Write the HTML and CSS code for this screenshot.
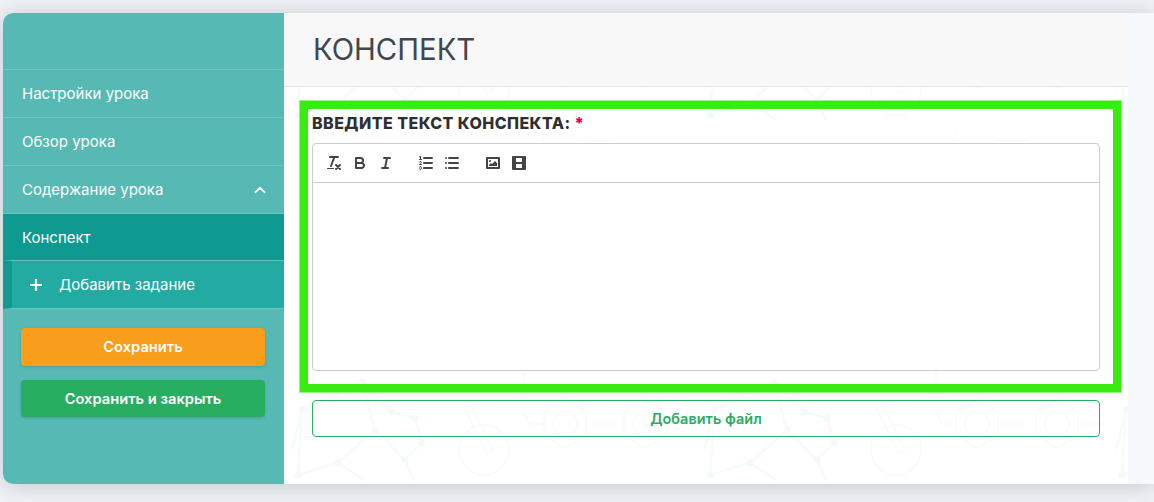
FILE: index.html
```html
<!DOCTYPE html>
<html lang="ru">
<head>
<meta charset="utf-8">
<title>Конспект</title>
<link rel="stylesheet" href="styles.css">
</head>
<body>
<div class="card">
  <aside class="sidebar">
    <div class="side-top"></div>
    <a class="item">Настройки урока</a>
    <a class="item">Обзор урока</a>
    <a class="item item-open">Содержание урока
      <svg class="chevron" viewBox="0 0 12 8" width="12" height="8"><path d="M1.5 6.2 6 1.8l4.5 4.4" fill="none" stroke="#fff" stroke-width="1.8" stroke-linecap="round" stroke-linejoin="round"/></svg>
    </a>
    <a class="item item-active">Конспект</a>
    <a class="item item-add">
      <svg class="plus" viewBox="0 0 12 12" width="12" height="12"><path d="M6 0v12M0 6h12" stroke="#fff" stroke-width="2.2"/></svg>
      Добавить задание
    </a>
    <div class="side-actions">
      <button class="btn btn-orange">Сохранить</button>
      <button class="btn btn-green">Сохранить и закрыть</button>
    </div>
  </aside>
  <main class="main">
    <header class="head"><h1 class="title">КОНСПЕКТ</h1></header>
    <section class="body">
      <svg class="pattern" aria-hidden="true" width="100%" height="100%">
        <defs>
          <pattern id="chem" x="0" y="113" width="412" height="360" patternUnits="userSpaceOnUse">
            <g fill="none" stroke="#f7fbfc" stroke-width="1.5">
              <path stroke-width="2.500" d="M78 182 108 212 131 218 138 243 121 260 91 230 78 182M91 230 54 263 14 275 18 210 78 182M121 260 130 280M54 263 80 280M8 250 18 210"/>
              <path d="M281 200l21 12v24l-21 12-21-12v-24zM361 200l21 12v24l-21 12-21-12v-24z"/>
              <circle cx="281" cy="224" r="12"/><circle cx="361" cy="224" r="12"/>
              <path d="M302 224h30M382 224h30M260 224h-14l-8-14M187 205l22 45-6 4-22-45zM240 170v30"/>
              <circle cx="200" cy="250" r="25"/>
              <path d="M210 330a60 40 0 0 1 70-5M260 290l-4 40M300 300h30l10 20-40 8z"/>
              <path d="M60 60l40 60M200 40l20 70M330 50l40 50M280 0v20M340 0v20"/>
              <circle cx="120" cy="80" r="30"/><path d="M260 60h50l20 30-50 10z"/>
            </g>
            <g fill="#f3fafa">
              <circle cx="78" cy="182" r="3.500"/><circle cx="108" cy="212" r="3.500"/><circle cx="131" cy="218" r="3.500"/><circle cx="91" cy="230" r="3.500"/><circle cx="138" cy="243" r="3.500"/><circle cx="121" cy="260" r="3.500"/><circle cx="54" cy="263" r="3.500"/><circle cx="14" cy="275" r="3.500"/><circle cx="18" cy="210" r="3.500"/>
            </g>
          </pattern>
        </defs>
        <rect width="100%" height="100%" fill="url(#chem)"/>
      </svg>
      <div class="frame">
        <label class="label">ВВЕДИТЕ ТЕКСТ КОНСПЕКТА: <span class="req">*</span></label>
        <div class="editor">
          <div class="toolbar">
            <div class="group">
              <span class="tool"><svg viewBox="0 0 18 18"><path class="s" d="M5 3h8M6 12 9.35 3M11 11l4 4M15 11l-4 4"/><rect class="f" height="1" rx=".5" width="7" x="2" y="14"/></svg></span>
              <span class="tool"><svg viewBox="0 0 18 18"><path class="s" d="M5 4h4.500a2.500 2.500 0 0 1 2.500 2.500v0A2.500 2.500 0 0 1 9.500 9H5zM5 9h5.500a2.500 2.500 0 0 1 2.500 2.500v0a2.500 2.500 0 0 1-2.500 2.500H5z"/></svg></span>
              <span class="tool"><svg viewBox="0 0 18 18"><path class="s" d="M7 4h6M5 14h6M8 14l2-10"/></svg></span>
            </div>
            <div class="group">
              <span class="tool"><svg viewBox="0 0 18 18"><path class="s" d="M7 4h8M7 9h8M7 14h8"/><path class="t" d="M2.500 5.500h2M4.500 10.500h-2c0-.234 1.850-1.076 1.850-2.234A.959.959 0 0 0 2.500 8.156M2.500 14.846a.959.959 0 0 0 1.850-.109A.7.7 0 0 0 3.750 14a.688.688 0 0 0 .6-.736.959.959 0 0 0-1.850-.109"/><path class="f" d="M3.500 6A.5.5 0 0 1 3 5.500V3.085l-.276.138A.5.5 0 0 1 2.053 3c-.124-.247-.023-.324.224-.447l1-.5A.5.5 0 0 1 4 2.500v3A.5.5 0 0 1 3.500 6Z"/></svg></span>
              <span class="tool"><svg viewBox="0 0 18 18"><path class="s" d="M6 4h9M6 9h9M6 14h9M3 4h0M3 9h0M3 14h0"/></svg></span>
            </div>
            <div class="group">
              <span class="tool"><svg viewBox="0 0 18 18"><rect class="s" height="10" width="12" x="3" y="4"/><circle class="f" cx="6" cy="7" r="1"/><path class="f" d="M5 12v-1l2-2 1 1 3-3 2 2v3z"/></svg></span>
              <span class="tool"><svg viewBox="0 0 18 18"><rect class="s" height="12" width="12" x="3" y="3"/><path class="f" d="M3 3h3v12H3zM12 3h3v12h-3zM5 8h8v2H5z"/></svg></span>
            </div>
          </div>
          <div class="area"></div>
        </div>
      </div>
      <button class="btn-file">Добавить файл</button>
    </section>
  </main>
  <div class="gutter"></div>
</div>
</body>
</html>
```
FILE: styles.css
```css
* { box-sizing: border-box; }
html, body { height: 100%; }
body {
  margin: 0;
  padding: 13px 0 0 3px;
  overflow: hidden;
  background: #eff3f7;
  font-family: Inter, "Noto Sans", "Liberation Sans", sans-serif;
  color: #333;
}
.card {
  display: flex;
  height: 471px;
  border-radius: 10px 0 0 10px;
  background: #f5f9fc;
  box-shadow: 0 2px 22px rgba(40, 50, 55, .22);
}
.sidebar {
  flex: 0 0 281px;
  background: #57b9b3;
  border-radius: 10px 0 0 10px;
  color: #fff;
  font-size: 15px;
}
.side-top { height: 56px; }
.item {
  display: flex;
  align-items: center;
  height: 48px;
  padding-left: 19px;
  border-top: 1px solid #6bc7c1;
}
.item-open { position: relative; }
.chevron { margin-left: auto; margin-right: 18px; }
.item-active { height: 47px; background: #0e9a90; border-top-color: #6bc7c1; }
.item-add {
  height: 49px;
  padding-left: 18px;
  border-left: 9px solid #0e9a90;
  background: #23aaa2;
  border-top-color: #5fc2bb;
  border-bottom: 1px solid #6bc7c1;
}
.plus { margin-right: 17px; }
.side-actions {
  display: flex;
  flex-direction: column;
  gap: 14px;
  padding: 19px 19px 0 18px;
}
.btn {
  height: 38px;
  border: 0;
  border-radius: 4px;
  color: #fff;
  font: 600 14.7px Inter, "Noto Sans", sans-serif;
  box-shadow: 0 1px 3px rgba(0, 0, 0, .14);
}
.btn-orange { background: #f99d1c; }
.btn-green { background: #27ae60; height: 37px; }
.main {
  flex: 0 0 844px;
  display: flex;
  flex-direction: column;
  background: #fff;
  border-top-right-radius: 8px;
}
.head {
  height: 74px;
  padding-left: 29px;
  background: #f8f8f8;
  border-bottom: 1px solid #e4e4e4;
  border-top-right-radius: 8px;
}
.title {
  margin: 0;
  font-size: 29.3px;
  line-height: 73px;
  font-weight: 400;
  color: #40474f;
}
.body {
  position: relative;
  flex: 1;
  padding: 13px 6px 0 15px;
}
.pattern { position: absolute; inset: 0; }
.frame {
  position: relative;
  height: 293px;
  padding: 4px 13px 0 4px;
  border: 9px solid #36ec10;
  outline: 1px solid #9cf08c;
  outline-offset: -1px;
}
.label {
  display: block;
  margin: 0 0 10px;
  font-size: 16px;
  line-height: 20px;
  font-weight: 800;
  letter-spacing: .45px;
  color: #2f2f2f;
}
.req { color: #e5004c; }
.editor {
  height: 228px;
  border: 1px solid #ccc;
  border-radius: 4px;
  background: #fff;
  overflow: hidden;
}
.toolbar {
  display: flex;
  height: 39px;
  padding: 7px 8px;
  border-bottom: 1px solid #ccc;
}
.group { display: flex; margin-right: 14px; }
.group + .group { margin-right: 15px; }
.tool { width: 26px; height: 24px; padding: 3px 4px; display: block; }
.tool svg { display: block; width: 18px; height: 18px; }
.s, .t { fill: none; stroke: #444; stroke-linecap: round; stroke-linejoin: round; stroke-width: 2; }
.t { stroke-width: 1; }
.f { fill: #444; }
.btn-file {
  position: relative;
  display: block;
  width: 788px;
  height: 37px;
  margin: 7px 0 0 13px;
  border: 1px solid #27ae60;
  border-radius: 4px;
  background: transparent;
  color: #2eaa63;
  font: 600 14.5px Inter, "Noto Sans", sans-serif;
}
.gutter { flex: 1; }
```
